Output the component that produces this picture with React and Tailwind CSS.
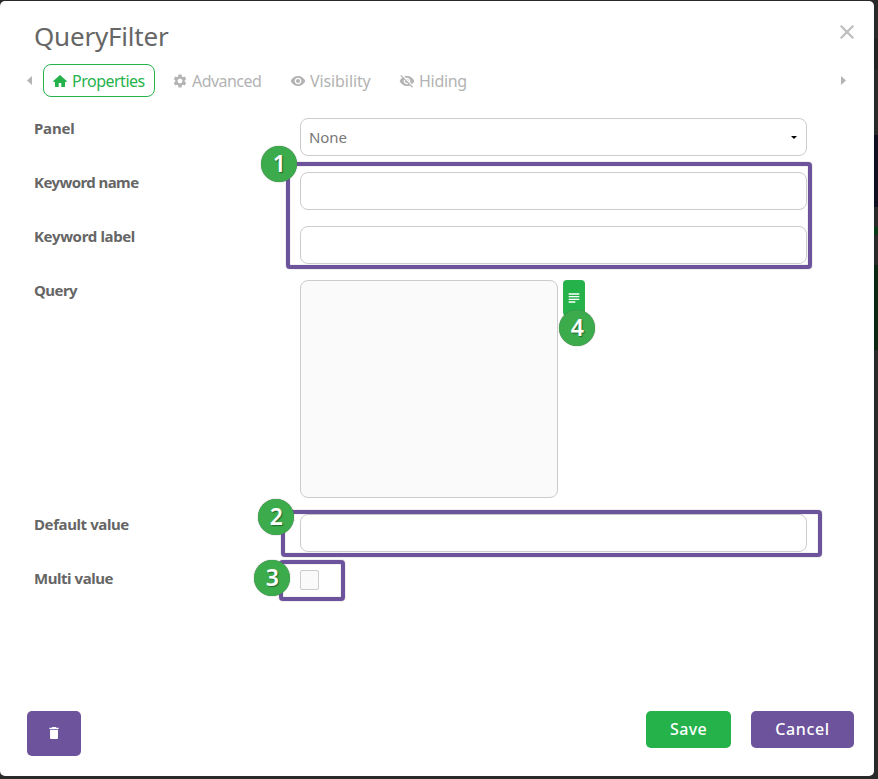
import React from "react";
import { MdSettings, MdVisibility, MdVisibilityOff, MdSubject, MdDelete } from "react-icons/md";

function Row({ label, spacing, children }) {
  return (
    <div className="flex items-start">
      <div className={`w-[266px] shrink-0 text-[15px] leading-[21px] font-bold text-[#666] ${spacing}`}>{label}</div>
      {children}
    </div>
  );
}

function Field() {
  return <input className="block h-[38px] w-[507px] rounded-[8px] border border-[#ccc] bg-white px-2 outline-none" />;
}

function HomeIcon({ className }) {
  return (
    <svg className={className} viewBox="0 0 16 16" fill="currentColor">
      <path d="M8 2L1 8.2l.7.8H3v5h3.7v-4h2.6v4H13V9h1.3l.7-.8z" />
    </svg>
  );
}

function Tab({ icon: Icon, label, className, spacing }) {
  return (
    <div className={`flex h-[33px] shrink-0 items-center gap-1 text-[16px] text-[#b3b3b3] ${className}`}>
      <Icon className="size-4 shrink-0" />
      <span className={`whitespace-nowrap leading-5 ${spacing}`}>{label}</span>
    </div>
  );
}

function Frame({ className }) {
  return <div className={`pointer-events-none absolute rounded-[4px] border-4 border-[#6d529c] shadow-[0_0_1px_#555,inset_0_0_1px_#777] ${className}`} />;
}

function Marker({ n, className }) {
  return (
    <div className={`absolute flex size-9 items-center justify-center rounded-full bg-[#3bab4b] pb-px font-['Noto_Sans',sans-serif] text-[23px] font-semibold leading-none text-white shadow-[0_0_1px_#555] [text-shadow:1px_1px_1px_#0006] ${className}`}>
      {n}
    </div>
  );
}

export default function App() {
  return (
    <div className="relative h-[779px] w-[878px] overflow-hidden bg-[#292929] pt-px font-['Noto_Sans',sans-serif]">
      <div className="absolute right-0 top-[39px] h-[30px] w-1 bg-[#222]" />
      <div className="absolute right-0 top-[135px] h-[72px] w-1 bg-[#100f20]" />
      <div className="absolute right-0 top-[227px] h-2 w-1 bg-[#063b16]" />
      <div className="absolute right-0 top-[265px] h-[85px] w-1 bg-[#0b2711]" />
      <div className="relative flex h-[775px] w-[874px] flex-col rounded-[5px] bg-white">
        <header className="flex h-[63px] items-start justify-between pl-[34px] pr-5 pt-[18px]">
          <h1 className="-mt-px text-[26px] leading-[36px] tracking-[-0.2px] text-[#666]">QueryFilter</h1>
          <svg className="mt-[6px] size-[14px]" viewBox="0 0 14 14" fill="none" stroke="#bdbdbd" strokeWidth="2.2">
            <path d="M.7.7l12.6 12.6M13.3.7L.7 13.3" />
          </svg>
        </header>
        <nav className="flex h-[33px] items-center pl-[27px]">
          <svg className="mr-[11px] h-[9px] w-[5px]" viewBox="0 0 5 9" fill="#b3b3b3"><path d="M5 0v9L0 4.5z" /></svg>
          <Tab icon={HomeIcon} label="Properties" className="w-[112px] rounded-[8px] border border-[#25b24b] pl-2 !text-[#25b24b]" spacing="tracking-[-0.5px]" />
          <Tab icon={MdSettings} label="Advanced" className="ml-[17px] w-[118px]" spacing="tracking-[-0.55px]" />
          <Tab icon={MdVisibility} label="Visibility" className="w-[109px]" spacing="tracking-[-0.1px]" />
          <Tab icon={MdVisibilityOff} label="Hiding" className="w-[90px]" spacing="tracking-[-0.3px]" />
          <svg className="ml-auto mr-[28px] h-[9px] w-[5px]" viewBox="0 0 5 9" fill="#b3b3b3"><path d="M0 0v9l5-4.5z" /></svg>
        </nav>
        <main className="mt-[21px] flex flex-col gap-4 pl-[34px]">
          <Row label="Panel" spacing="tracking-[-0.2px]">
            <div className="flex h-[38px] w-[507px] items-center justify-between rounded-[8px] border border-[#ccc] pl-2 pr-[9px] text-[15px] text-[#777]">
              <span className="tracking-[-0.1px]">None</span>
              <svg className="h-[3px] w-[6px]" viewBox="0 0 6 3"><path d="M0 0h6L3 3z" /></svg>
            </div>
          </Row>
          <Row label="Keyword name" spacing="tracking-[-0.58px]"><Field /></Row>
          <Row label="Keyword label" spacing="tracking-[-0.35px]"><Field /></Row>
          <Row label="Query" spacing="tracking-[-0.55px]">
            <div className="h-[218px] w-[258px] rounded-[8px] border border-[#ccc] bg-[#fafafa]" />
            <button className="ml-[5px] flex h-[36px] w-[22px] items-center justify-center rounded-[4px] bg-[#25b24b] pr-px text-white">
              <MdSubject className="size-4" />
            </button>
          </Row>
          <Row label="Default value" spacing="tracking-[-0.4px]"><Field /></Row>
          <Row label="Multi value" spacing="tracking-[-0.45px]">
            <div className="mt-[2px] h-5 w-[19px] rounded-[2px] border border-[#ccc] bg-[#fafafa]" />
          </Row>
        </main>
        <footer className="mt-auto flex h-[65px] items-start pl-[27px] pr-5 text-[16px] font-medium text-white">
          <button className="flex h-[45px] w-[54px] items-center justify-center rounded-[5px] bg-[#6d529c] pb-px"><MdDelete className="size-4" /></button>
          <button className="ml-auto mr-5 h-[37px] w-[85px] rounded-[5px] bg-[#25b24b] pb-px tracking-[0.3px]">Save</button>
          <button className="h-[37px] w-[103px] rounded-[5px] bg-[#6d529c] pb-px tracking-[0.6px]">Cancel</button>
        </footer>
      </div>
      <Frame className="left-[286px] top-[162px] h-[107px] w-[526px]" />
      <Frame className="left-[281px] top-[510px] h-[47px] w-[541px]" />
      <Frame className="left-[279px] top-[560px] h-[41px] w-[66px]" />
      <Marker n="1" className="left-[261.4px] top-[145.5px]" />
      <Marker n="4" className="left-[559.4px] top-[309.5px]" />
      <Marker n="2" className="left-[258.4px] top-[499.4px]" />
      <Marker n="3" className="left-[254.4px] top-[559.5px]" />
    </div>
  );
}
